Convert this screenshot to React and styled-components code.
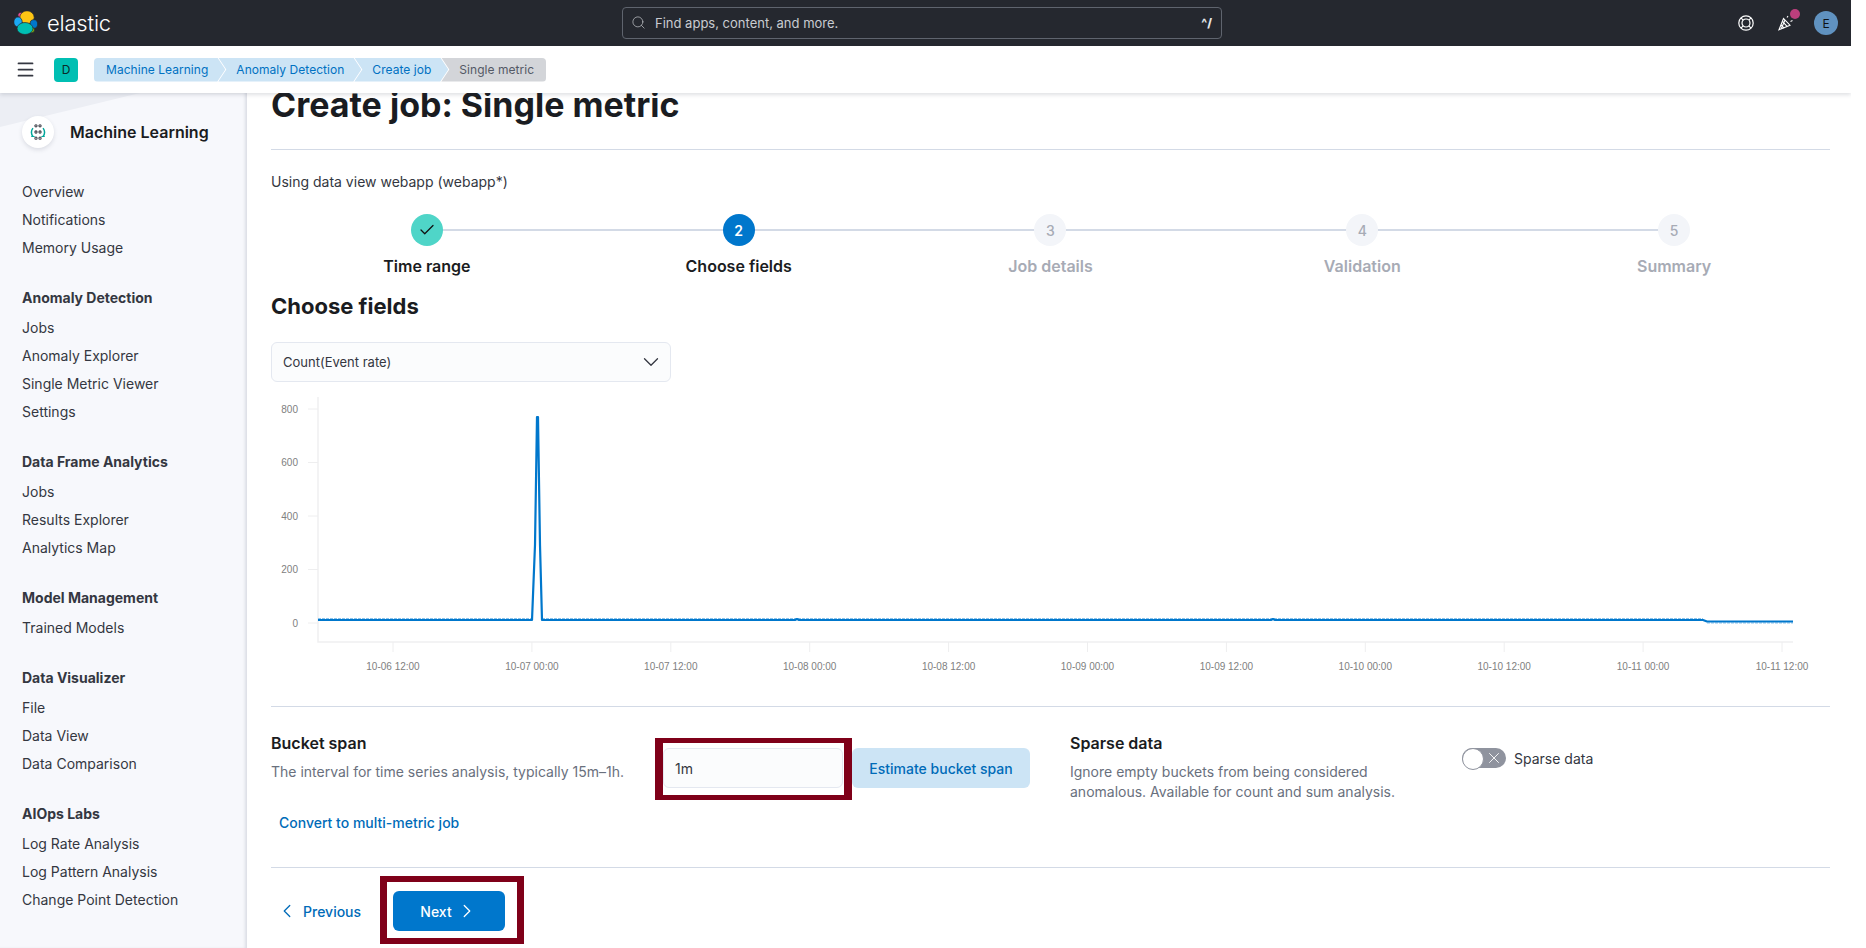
import React from 'react';
import styled, { createGlobalStyle } from 'styled-components';
import { Menu, Search, Check, ChevronDown, ChevronLeft, ChevronRight, X } from 'lucide-react';

const GlobalStyle = createGlobalStyle`
  html, body {
    margin: 0;
    padding: 0;
    background: #fff;
    overflow: hidden;
  }
  body {
    font-family: Inter, "Noto Sans", sans-serif;
    font-size: 14px;
    color: #343741;
  }
  * { box-sizing: border-box; }
`;

const Page = styled.div`
  width: 1851px;
  height: 948px;
  display: flex;
  flex-direction: column;
  overflow: hidden;
`;

const TopBar = styled.header`
  height: 46px;
  flex: none;
  background: #25282f;
  display: grid;
  grid-template-columns: 622px 600px 1fr;
  align-items: center;
`;

const Brand = styled.div`
  display: flex;
  align-items: center;
  gap: 9px;
  padding-left: 14px;
  color: #fff;
  font-size: 22px;
  font-weight: 300;
  letter-spacing: -0.2px;
`;

const GlobalSearch = styled.div`
  height: 32px;
  margin-top: -1px;
  border: 1px solid #5f646e;
  border-radius: 4px;
  display: flex;
  align-items: center;
  padding: 0 9px 0 8px;
  gap: 9px;
  color: #c9ccd1;
  font-size: 13px;
  svg { color: #c9ccd1; flex: none; }
`;

const Shortcut = styled.span`
  margin-left: auto;
  font-size: 12px;
  font-weight: 800;
  color: #e6e8eb;
`;

const TopActions = styled.div`
  display: flex;
  justify-content: flex-end;
  align-items: center;
  padding-right: 13px;
  gap: 20px;
  & > :first-child { margin-right: 4px; }
`;

const IconSlot = styled.span`
  position: relative;
  display: flex;
  color: #fff;
`;

const Dot = styled.span`
  position: absolute;
  top: -6px;
  right: -6px;
  width: 10px;
  height: 10px;
  border-radius: 50%;
  background: #bc3f7d;
`;

const Avatar = styled.span`
  width: 24px;
  height: 24px;
  border-radius: 50%;
  background: #6092c0;
  color: #0e1116;
  font-size: 12px;
  display: flex;
  align-items: center;
  justify-content: center;
`;

const SubBar = styled.div`
  height: 47px;
  flex: none;
  background: #fff;
  display: flex;
  align-items: center;
  padding-left: 15px;
  position: relative;
  z-index: 2;
  box-shadow: 0 2px 4px rgba(60, 70, 90, 0.16);
`;

const MenuButton = styled.span`
  display: flex;
  color: #343741;
  margin-right: 18px;
`;

const SpaceBadge = styled.span`
  width: 24px;
  height: 24px;
  border-radius: 4px;
  background: #00bfb3;
  color: #0a2b29;
  font-size: 12px;
  display: flex;
  align-items: center;
  justify-content: center;
  margin-right: 16px;
`;

const Crumbs = styled.nav`
  display: flex;
  align-items: center;
`;

const Crumb = styled.span`
  height: 24px;
  display: flex;
  align-items: center;
  font-size: 12px;
  letter-spacing: 0.04px;
  padding: 0 ${p => (p.$last ? '12px' : '17px')} 0 ${p => (p.$first ? '12px' : '18px')};
  margin-left: ${p => (p.$first ? '0' : '-7px')};
  color: ${p => (p.$last ? '#535966' : '#0071c2')};
  background: ${p => (p.$last ? '#d3d5d9' : '#cce4f5')};
  border-radius: ${p => (p.$first ? '4px 0 0 4px' : p.$last ? '0 4px 4px 0' : '0')};
  clip-path: ${p =>
    p.$first
      ? 'polygon(0 0, calc(100% - 8px) 0, 100% 50%, calc(100% - 8px) 100%, 0 100%)'
      : p.$last
      ? 'polygon(0 0, 100% 0, 100% 100%, 0 100%, 8px 50%)'
      : 'polygon(0 0, calc(100% - 8px) 0, 100% 50%, calc(100% - 8px) 100%, 0 100%, 8px 50%)'};
`;

const Body = styled.div`
  flex: 1;
  display: flex;
  min-height: 0;
`;

const Sidebar = styled.aside`
  width: 247px;
  flex: none;
  position: relative;
  overflow: hidden;
  background: #f7f8fc;
  box-shadow: inset -3px 0 3px -1px rgba(60, 70, 90, 0.14);
  padding: 23px 0 0 22px;
`;

const Swoosh = styled.div`
  position: absolute;
  top: 0;
  left: 0;
  width: 140px;
  height: 34px;
  background: #eceef4;
  clip-path: polygon(0 0, 100% 0, 0 100%);
`;

const SideHeader = styled.div`
  position: relative;
  display: flex;
  align-items: center;
  gap: 16px;
  font-size: 16px;
  font-weight: 600;
  color: #1a1c21;
  height: 32px;
  margin-bottom: 30px;
`;

const SideLogo = styled.span`
  width: 32px;
  height: 32px;
  border-radius: 50%;
  background: #fff;
  box-shadow: 0 2px 4px rgba(60, 70, 90, 0.15);
  display: flex;
  align-items: center;
  justify-content: center;
`;

const SideGroup = styled.div`
  margin-bottom: 22px;
`;

const SideHeading = styled.div`
  font-weight: 700;
  color: #343741;
  line-height: 28px;
  margin-bottom: 2px;
`;

const SideItem = styled.div`
  color: #343741;
  line-height: 28px;
`;

const Content = styled.main`
  flex: 1;
  min-width: 0;
  padding: 0 21px 0 24px;
`;

const Title = styled.h1`
  margin: -8px 0 0;
  font-size: 34px;
  line-height: 40px;
  font-weight: 700;
  color: #1a1c21;
  height: 37px;
`;

const Rule = styled.hr`
  border: 0;
  border-top: 1px solid #d3dae6;
  margin: ${p => p.$margin || '0'};
`;

const DataView = styled.p`
  margin: 22px 0 0;
  line-height: 20px;
  color: #343741;
`;

const Steps = styled.ol`
  list-style: none;
  margin: 22px 0 0;
  padding: 0;
  display: grid;
  grid-template-columns: repeat(5, 1fr);
`;

const Step = styled.li`
  position: relative;
  display: flex;
  flex-direction: column;
  align-items: center;
  gap: 8px;
  &:not(:last-child)::after {
    content: '';
    position: absolute;
    top: 15px;
    left: 50%;
    width: 100%;
    height: 2px;
    background: #d3dae6;
  }
`;

const StepDot = styled.span`
  position: relative;
  z-index: 1;
  width: 32px;
  height: 32px;
  border-radius: 50%;
  display: flex;
  align-items: center;
  justify-content: center;
  font-size: 14px;
  font-weight: ${p => (p.$state === 'todo' ? 500 : 600)};
  background: ${p => (p.$state === 'done' ? '#4fd5c8' : p.$state === 'current' ? '#0077cc' : '#f3f5f9')};
  color: ${p => (p.$state === 'current' ? '#fff' : p.$state === 'done' ? '#111' : '#a7abb5')};
`;

const StepLabel = styled.span`
  font-size: 16px;
  line-height: 24px;
  font-weight: 600;
  color: ${p => (p.$muted ? '#a7abb5' : '#1a1c21')};
`;

const SectionTitle = styled.h2`
  margin: 12px 0 0;
  font-size: 22px;
  line-height: 32px;
  font-weight: 700;
  color: #1a1c21;
`;

const SelectBox = styled.div`
  margin-top: 20px;
  width: 400px;
  height: 40px;
  border: 1px solid #e4e8f0;
  border-radius: 6px;
  background: #fbfcfd;
  display: flex;
  align-items: center;
  justify-content: space-between;
  padding: 0 6px 1px 11px;
  font-size: 13px;
  color: #343741;
`;

const ChartWrap = styled.div`
  height: 311px;
  margin-top: 13px;
  svg { display: block; }
`;

const FormRow = styled.div`
  display: flex;
  margin-top: 26px;
  height: 134px;
`;

const Described = styled.div`
  width: ${p => p.$width}px;
  flex: none;
`;

const FieldTitle = styled.h3`
  margin: 0;
  font-size: 16px;
  line-height: 20px;
  font-weight: 600;
  color: #1a1c21;
`;

const Help = styled.p`
  margin: 9px 0 0;
  line-height: 20px;
  color: #69707d;
`;

const TextLink = styled.a`
  display: block;
  margin: 31px 0 0 8px;
  line-height: 20px;
  font-weight: 500;
  color: #006bb8;
`;

const FieldGroup = styled.div`
  display: flex;
  align-items: flex-start;
  gap: 9px;
  padding-top: 15px;
  width: 407px;
  flex: none;
`;

const Highlight = styled.div`
  position: relative;
  flex: none;
  &::after {
    content: '';
    position: absolute;
    top: ${p => p.$inset[0]}px;
    right: ${p => p.$inset[1]}px;
    bottom: ${p => p.$inset[2]}px;
    left: ${p => p.$inset[3]}px;
    border-style: solid;
    border-color: #7f0019;
    border-width: ${p => p.$border};
    pointer-events: none;
  }
`;

const TextInput = styled.div`
  width: 180px;
  height: 40px;
  border: 1px solid #e4e8f0;
  border-radius: 6px;
  background: #fbfcfd;
  display: flex;
  align-items: center;
  padding: 0 11px;
  font-size: 14px;
  color: #343741;
`;

const SoftButton = styled.button`
  width: 178px;
  height: 40px;
  border: 0;
  border-radius: 6px;
  background: #cce4f5;
  color: #006bb8;
  font: 500 14px Inter, sans-serif;
`;

const ToggleRow = styled.div`
  display: flex;
  align-items: center;
  gap: 8px;
  padding-top: 15px;
  height: 35px;
  font-size: 14px;
  color: #343741;
`;

const Toggle = styled.span`
  position: relative;
  width: 44px;
  height: 20px;
  border-radius: 10px;
  background: #8f939e;
  color: #fff;
  display: flex;
  align-items: center;
  justify-content: flex-end;
  padding-right: 3px;
  &::before {
    content: '';
    position: absolute;
    left: 0;
    top: 0;
    width: 20px;
    height: 20px;
    border-radius: 50%;
    background: #fff;
    border: 1px solid #8f939e;
  }
`;

const Footer = styled.div`
  display: flex;
  align-items: center;
  margin-top: 23px;
`;

const LinkButton = styled.a`
  width: 122px;
  padding-left: 5px;
  display: flex;
  align-items: center;
  gap: 5px;
  color: #006bb8;
  font-weight: 500;
`;

const PrimaryButton = styled.button`
  width: 112px;
  height: 40px;
  border: 0;
  border-radius: 6px;
  background: #0077cc;
  color: #fff;
  font: 500 14px Inter, sans-serif;
  display: flex;
  align-items: center;
  justify-content: center;
  gap: 4px;
`;

const sideGroups = [
  { items: ['Overview', 'Notifications', 'Memory Usage'] },
  { heading: 'Anomaly Detection', items: ['Jobs', 'Anomaly Explorer', 'Single Metric Viewer', 'Settings'] },
  { heading: 'Data Frame Analytics', items: ['Jobs', 'Results Explorer', 'Analytics Map'] },
  { heading: 'Model Management', items: ['Trained Models'] },
  { heading: 'Data Visualizer', items: ['File', 'Data View', 'Data Comparison'] },
  { heading: 'AIOps Labs', items: ['Log Rate Analysis', 'Log Pattern Analysis', 'Change Point Detection'] },
];

const steps = [
  { label: 'Time range', state: 'done' },
  { label: 'Choose fields', state: 'current', n: 2 },
  { label: 'Job details', state: 'todo', n: 3 },
  { label: 'Validation', state: 'todo', n: 4 },
  { label: 'Summary', state: 'todo', n: 5 },
];

const crumbs = ['Machine Learning', 'Anomaly Detection', 'Create job', 'Single metric'];

const ElasticLogo = () => (
  <svg width="24" height="24" viewBox="0 0 24 24" stroke="#25282f" strokeWidth="0.7">
    <circle cx="6.5" cy="4" r="2.6" fill="#f04e98" />
    <ellipse cx="13" cy="6.5" rx="7.2" ry="6.7" fill="#fec514" />
    <ellipse cx="4" cy="11" rx="4.2" ry="5" fill="#1ba9f5" />
    <ellipse cx="19.8" cy="13" rx="3.8" ry="4.3" fill="#0077cc" />
    <circle cx="17.7" cy="19" r="2.7" fill="#93c90e" />
    <ellipse cx="11" cy="17.5" rx="8" ry="6" fill="#00bfb3" />
  </svg>
);

const CheerIcon = () => (
  <svg width="16" height="16" viewBox="0 0 16 16" fill="none" stroke="#fff" strokeWidth="1.1">
    <path d="M1 14.7 5.5 3.5 12 10.2z" />
    <path d="M3 10l3.2 3.2M4.500 6.500l4.600 4.800M7 5 3.200 13.800" />
    <path d="M9 2.500 10 1M12.500 6.500l2-1" />
  </svg>
);

const LifeRing = () => (
  <svg width="16" height="16" viewBox="0 0 16 16" fill="none" stroke="#fff" strokeWidth="1.2">
    <circle cx="8" cy="8" r="7.2" />
    <circle cx="8" cy="8" r="4" />
    <path d="M2.900 2.900l2.300 2.300M13.100 2.900l-2.300 2.300M2.900 13.100l2.300-2.300M13.100 13.100l-2.300-2.300" />
  </svg>
);

const MlIcon = () => (
  <svg width="18" height="18" viewBox="0 0 16 16" fill="none">
    <g stroke="#343741" strokeWidth="0.9">
      <circle cx="6.200" cy="2.500" r="1" />
      <circle cx="9.800" cy="2.500" r="1" />
      <circle cx="6.200" cy="8" r="1" />
      <circle cx="9.800" cy="8" r="1" />
      <circle cx="6.200" cy="13.500" r="1" />
      <circle cx="9.800" cy="13.500" r="1" />
    </g>
    <path d="M3.500 4.500C1.800 6.800 1.800 9.600 3.500 12M12.500 4.500c1.700 2.300 1.700 5.100 0 7.500" stroke="#00a69b" strokeWidth="1.300" />
    <path d="M2 12h3M11 12h3" stroke="#00a69b" strokeWidth="1" />
  </svg>
);

const xLabels = [
  '10-06 12:00', '10-07 00:00', '10-07 12:00', '10-08 00:00', '10-08 12:00', '10-09 00:00',
  '10-09 12:00', '10-10 00:00', '10-10 12:00', '10-11 00:00', '10-11 12:00',
];
const yLabels = [800, 600, 400, 200, 0];

// chart coordinates: origin is the content's left edge (271) and the chart's top (395)
const MetricChart = () => {
  const axisX = 47;
  const axisY = 247;
  const line = 'M47 225 L261 225 L264 150 L266 22 L267 22 L269 150 L271 225 L524 225 L526 224 L528 225 L1000 225 L1002 224 L1004 225 L1432 225 L1436 226.5 L1522 226.5';
  const band = 'M47 223.5 L261 223.5 M271 223.5 L1432 223.5 M1436 228 L1522 228';
  return (
    <svg width="1559" height="300" viewBox="0 0 1559 300">
      <path d={`M${axisX} 2 V${axisY} H1522`} fill="none" stroke="#f0f0f1" strokeWidth="1.5" />
      {yLabels.map((v, i) => {
        const y = 14 + i * 53.5;
        return (
          <g key={v}>
            <line x1="37" x2={axisX} y1={y} y2={y} stroke="#eeeeef" />
            <text x="27" y={y + 3.5} textAnchor="end" fontFamily="'Liberation Sans', sans-serif" fontSize="10" fill="#808080">{v}</text>
          </g>
        );
      })}
      {xLabels.map((t, i) => {
        const x = 122 + i * 138.9;
        return (
          <g key={t}>
            <line x1={x} x2={x} y1={axisY} y2={axisY + 10} stroke="#eeeeef" />
            <text x={x} y={275} textAnchor="middle" fontFamily="'Liberation Sans', sans-serif" fontSize="10" fill="#808080">{t}</text>
          </g>
        );
      })}
      <path d={band} fill="none" stroke="#8cc4ec" strokeWidth="1" strokeDasharray="3 1" />
      <path d={line} fill="none" stroke="#0077cc" strokeWidth="2.2" strokeLinejoin="round" />
    </svg>
  );
};

export default function App() {
  return (
    <Page>
      <GlobalStyle />
      <TopBar>
        <Brand>
          <ElasticLogo />
          elastic
        </Brand>
        <GlobalSearch>
          <Search size={15} strokeWidth={1.1} />
          Find apps, content, and more.
          <Shortcut>^/</Shortcut>
        </GlobalSearch>
        <TopActions>
          <IconSlot><LifeRing /></IconSlot>
          <IconSlot>
            <CheerIcon />
            <Dot />
          </IconSlot>
          <Avatar>E</Avatar>
        </TopActions>
      </TopBar>
      <SubBar>
        <MenuButton><Menu size={21} strokeWidth={2} /></MenuButton>
        <SpaceBadge>D</SpaceBadge>
        <Crumbs>
          {crumbs.map((c, i) => (
            <Crumb key={c} $first={i === 0} $last={i === crumbs.length - 1}>{c}</Crumb>
          ))}
        </Crumbs>
      </SubBar>
      <Body>
        <Sidebar>
          <Swoosh />
          <SideHeader>
            <SideLogo><MlIcon /></SideLogo>
            Machine Learning
          </SideHeader>
          {sideGroups.map((g, i) => (
            <SideGroup key={i}>
              {g.heading && <SideHeading>{g.heading}</SideHeading>}
              {g.items.map(item => <SideItem key={item}>{item}</SideItem>)}
            </SideGroup>
          ))}
        </Sidebar>
        <Content>
          <Title>Create job: Single metric</Title>
          <Rule $margin="27px 0 0" />
          <DataView>Using data view webapp (webapp*)</DataView>
          <Steps>
            {steps.map(s => (
              <Step key={s.label}>
                <StepDot $state={s.state}>
                  {s.state === 'done' ? <Check size={18} strokeWidth={1.7} /> : s.n}
                </StepDot>
                <StepLabel $muted={s.state === 'todo'}>{s.label}</StepLabel>
              </Step>
            ))}
          </Steps>
          <SectionTitle>Choose fields</SectionTitle>
          <SelectBox>
            Count(Event rate)
            <ChevronDown size={26} strokeWidth={1.2} />
          </SelectBox>
          <ChartWrap><MetricChart /></ChartWrap>
          <Rule />
          <FormRow>
            <Described $width={392}>
              <FieldTitle>Bucket span</FieldTitle>
              <Help>The interval for time series analysis, typically 15m–1h.</Help>
              <TextLink>Convert to multi-metric job</TextLink>
            </Described>
            <FieldGroup>
              <Highlight $inset={[-10, -9, -12, -8]} $border="5px 8px">
                <TextInput>1m</TextInput>
              </Highlight>
              <SoftButton>Estimate bucket span</SoftButton>
            </FieldGroup>
            <Described $width={392}>
              <FieldTitle>Sparse data</FieldTitle>
              <Help>Ignore empty buckets from being considered<br />anomalous. Available for count and sum analysis.</Help>
            </Described>
            <ToggleRow>
              <Toggle><X size={18} strokeWidth={1.2} /></Toggle>
              Sparse data
            </ToggleRow>
          </FormRow>
          <Rule />
          <Footer>
            <LinkButton><ChevronLeft size={22} strokeWidth={1.4} />Previous</LinkButton>
            <Highlight $inset={[-15, -19, -13, -13]} $border="6px 7px">
              <PrimaryButton>Next<ChevronRight size={22} strokeWidth={1.4} /></PrimaryButton>
            </Highlight>
          </Footer>
        </Content>
      </Body>
    </Page>
  );
}
